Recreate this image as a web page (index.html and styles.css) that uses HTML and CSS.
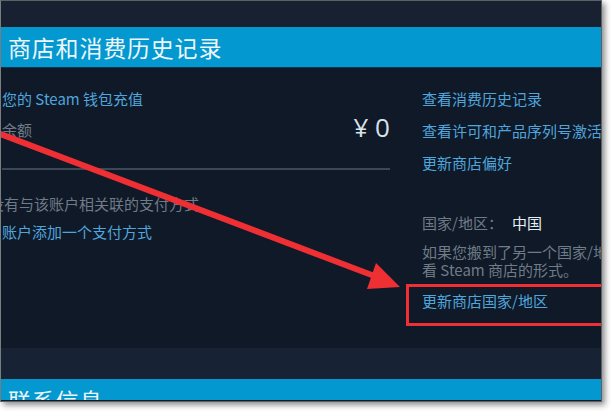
FILE: index.html
```html
<!DOCTYPE html>
<html lang="zh-CN">
<head>
<meta charset="utf-8">
<title>商店和消费历史记录</title>
<link rel="stylesheet" href="styles.css">
</head>
<body>
<div class="frame">
  <div class="topstrip"></div>
  <div class="header"><h2>商店和消费历史记录</h2></div>
  <div class="content">
    <div class="leftcol">
      <a class="link line first">您的 Steam 钱包充值</a>
      <div class="balance">
        <span class="label">余额</span>
        <span class="amount">¥ 0</span>
      </div>
      <div class="divider"></div>
      <div class="muted line gap1"><span class="cut">没</span>有与该账户相关联的支付方式</div>
      <a class="link line gap2">账户添加一个支付方式</a>
    </div>
    <div class="rightcol">
      <a class="link line first">查看消费历史记录</a>
      <a class="link line next">查看许可和产品序列号激活码</a>
      <a class="link line next">更新商店偏好</a>
      <div class="country line"><span class="muted">国家/地区：</span><span class="cname">中国</span></div>
      <p class="muted para">如果您搬到了另一个国家/地区，您可以在此更改您查<br>看 Steam 商店的形式。</p>
      <a class="link line update">更新商店国家/地区</a>
    </div>
  </div>
  <div class="substrip"></div>
  <div class="header next-section"><h2>联系信息</h2></div>
  <svg class="annot" width="601" height="401" viewBox="0 0 601 401">
    <line x1="-6" y1="131" x2="376" y2="276" stroke="#ee2f33" stroke-width="6"/>
    <polygon points="399,286 366,288 375,262" fill="#ee2f33"/>
    <rect x="406.5" y="284.5" width="200" height="39" fill="none" stroke="#ee2f33" stroke-width="3"/>
  </svg>
</div>
</body>
</html>
```

FILE: styles.css
```css
html, body {
  margin: 0;
  padding: 0;
  background: #ffffff;
}
body {
  font-family: "Noto Sans CJK SC", "Noto Sans", sans-serif;
  width: 611px;
  height: 411px;
  overflow: hidden;
}
.frame {
  position: relative;
  width: 600px;
  height: 400px;
  border: 1px solid #5d6166;
  border-left-color: #7a7d80;
  background: #0f1928;
  overflow: hidden;
  display: flex;
  flex-direction: column;
  box-shadow: 3px 3px 6px rgba(0, 0, 0, 0.45);
}
.topstrip {
  height: 26px;
  background: #172131;
  flex: none;
}
.header {
  height: 40px;
  background: #0398cf;
  flex: none;
  display: flex;
  align-items: center;
  padding-left: 7px;
}
.header h2 {
  margin: 0;
  font-weight: normal;
  font-size: 23px;
  letter-spacing: 0.8px;
  color: #eef6fb;
  line-height: 30px;
}
.content {
  height: 281px;
  flex: none;
  display: flex;
  border-top: 1px solid #0a3550;
  box-sizing: border-box;
}
.leftcol {
  width: 388px;
  padding-left: 1px;
  flex: none;
  display: flex;
  flex-direction: column;
}
.rightcol {
  padding-left: 32px;
  display: flex;
  flex-direction: column;
  white-space: nowrap;
}
.line {
  display: block;
  font-size: 15px;
  line-height: 20px;
}
.link {
  color: #4fa6dc;
  text-decoration: none;
}
.muted {
  color: #6f7b87;
}
.first {
  margin-top: 21px;
}
.next {
  margin-top: 12px;
}
.balance {
  display: flex;
  justify-content: space-between;
  align-items: center;
  height: 30px;
  margin-top: 3px;
}
.balance .label {
  color: #6f7b87;
  font-size: 15px;
  line-height: 20px;
  margin-top: 6px;
}
.balance .amount {
  color: #d8e2ea;
  font-family: "Open Sans", "Noto Sans CJK SC", sans-serif;
  font-size: 26px;
  line-height: 30px;
}
.divider {
  height: 2px;
  background: #3b4957;
  margin-top: 26px;
}
.gap1 {
  margin-top: 24px;
}
.gap2 {
  margin-top: 8px;
}
.cut {
  margin-left: -13px;
}
.country {
  margin-top: 40px;
}
.cname {
  color: #e6edf2;
  margin-left: 9px;
}
.para {
  margin: 10px 0 0;
  font-size: 15px;
  line-height: 18px;
}
.update {
  margin-top: 12px;
}
.substrip {
  height: 31px;
  background: #172234;
  flex: none;
}
.next-section {
  height: 21px;
  align-items: flex-start;
  overflow: hidden;
}
.next-section h2 {
  margin-top: 6px;
}
.annot {
  position: absolute;
  left: 0;
  top: 0;
}
```
